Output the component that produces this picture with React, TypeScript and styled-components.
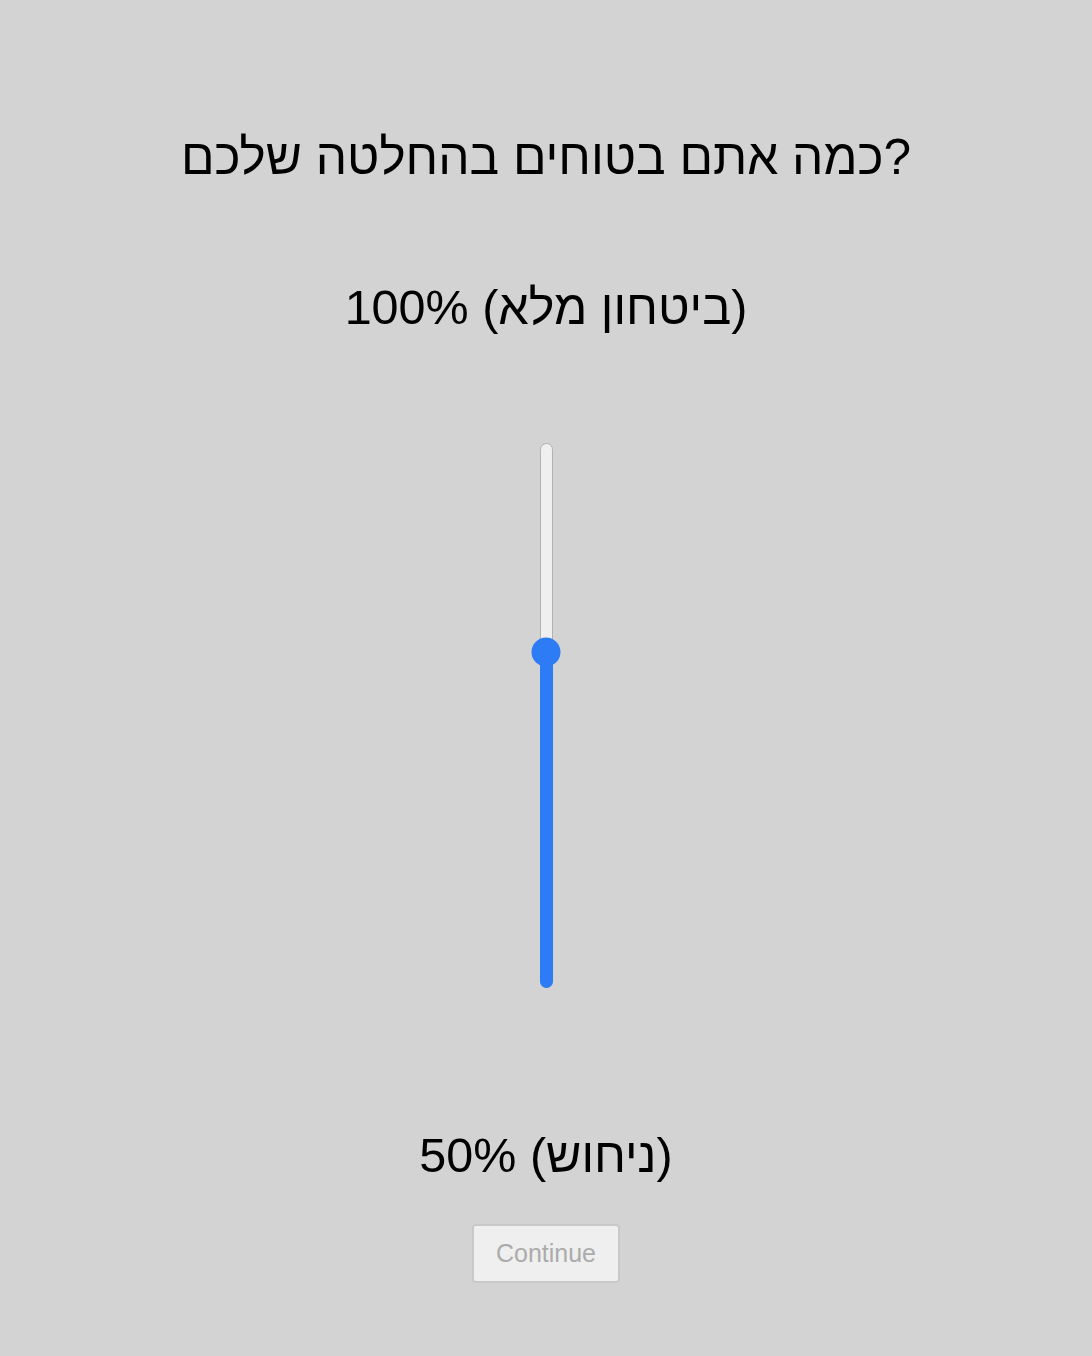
import React from "react";
import styled, { createGlobalStyle } from "styled-components";

const Global = createGlobalStyle`
  html, body {
    margin: 0;
    padding: 0;
    background: #d3d3d3;
  }
  body {
    font-family: "Liberation Sans", Arial, "DejaVu Sans", sans-serif;
  }
`;

const Page = styled.main`
  min-height: 1356px;
  box-sizing: border-box;
  padding-top: 129px;
  display: flex;
  flex-direction: column;
  align-items: center;
  color: #000;
`;

const Title = styled.h1`
  margin: 0;
  font-size: 49.5px;
  font-weight: 400;
  line-height: 56px;
`;

const Label = styled.div<{ $gapTop: number }>`
  margin-top: ${(p) => p.$gapTop}px;
  font-size: 48.5px;
  line-height: 56px;
`;

const Track = styled.div`
  margin-top: 108px;
  position: relative;
  width: 13px;
  height: 545px;
  box-sizing: border-box;
  border: 1px solid #b2b2b2;
  border-radius: 7px;
  background: #efefef;
`;

const Fill = styled.div`
  position: absolute;
  left: -1px;
  right: -1px;
  bottom: -1px;
  border-radius: 0 0 7px 7px;
  background: #2d7cf6;
`;

const Thumb = styled.div`
  position: absolute;
  left: 50%;
  width: 29px;
  height: 29px;
  border-radius: 50%;
  background: #2d7cf6;
  transform: translate(-50%, -50%);
`;

const Button = styled.button`
  margin-top: 41px;
  width: 148px;
  height: 59px;
  box-sizing: border-box;
  border: 2px solid #c9c9c9;
  border-radius: 4px;
  background: #efefef;
  color: #ababab;
  font-family: "Liberation Sans", Arial, sans-serif;
  font-size: 25px;
  padding: 0;
`;

export default function App() {
  const trackHeight = 545;
  const thumbFromTop = 208;
  const fillHeight = trackHeight - thumbFromTop;
  return (
    <>
      <Global />
      <Page>
        <Title>כמה אתם בטוחים בהחלטה שלכם?</Title>
        <Label $gapTop={94}>100% (ביטחון מלא)</Label>
        <Track>
          <Fill style={{ height: fillHeight }} />
          <Thumb style={{ top: thumbFromTop }} />
        </Track>
        <Label $gapTop={139}>50% (ניחוש)</Label>
        <Button disabled>Continue</Button>
      </Page>
    </>
  );
}
